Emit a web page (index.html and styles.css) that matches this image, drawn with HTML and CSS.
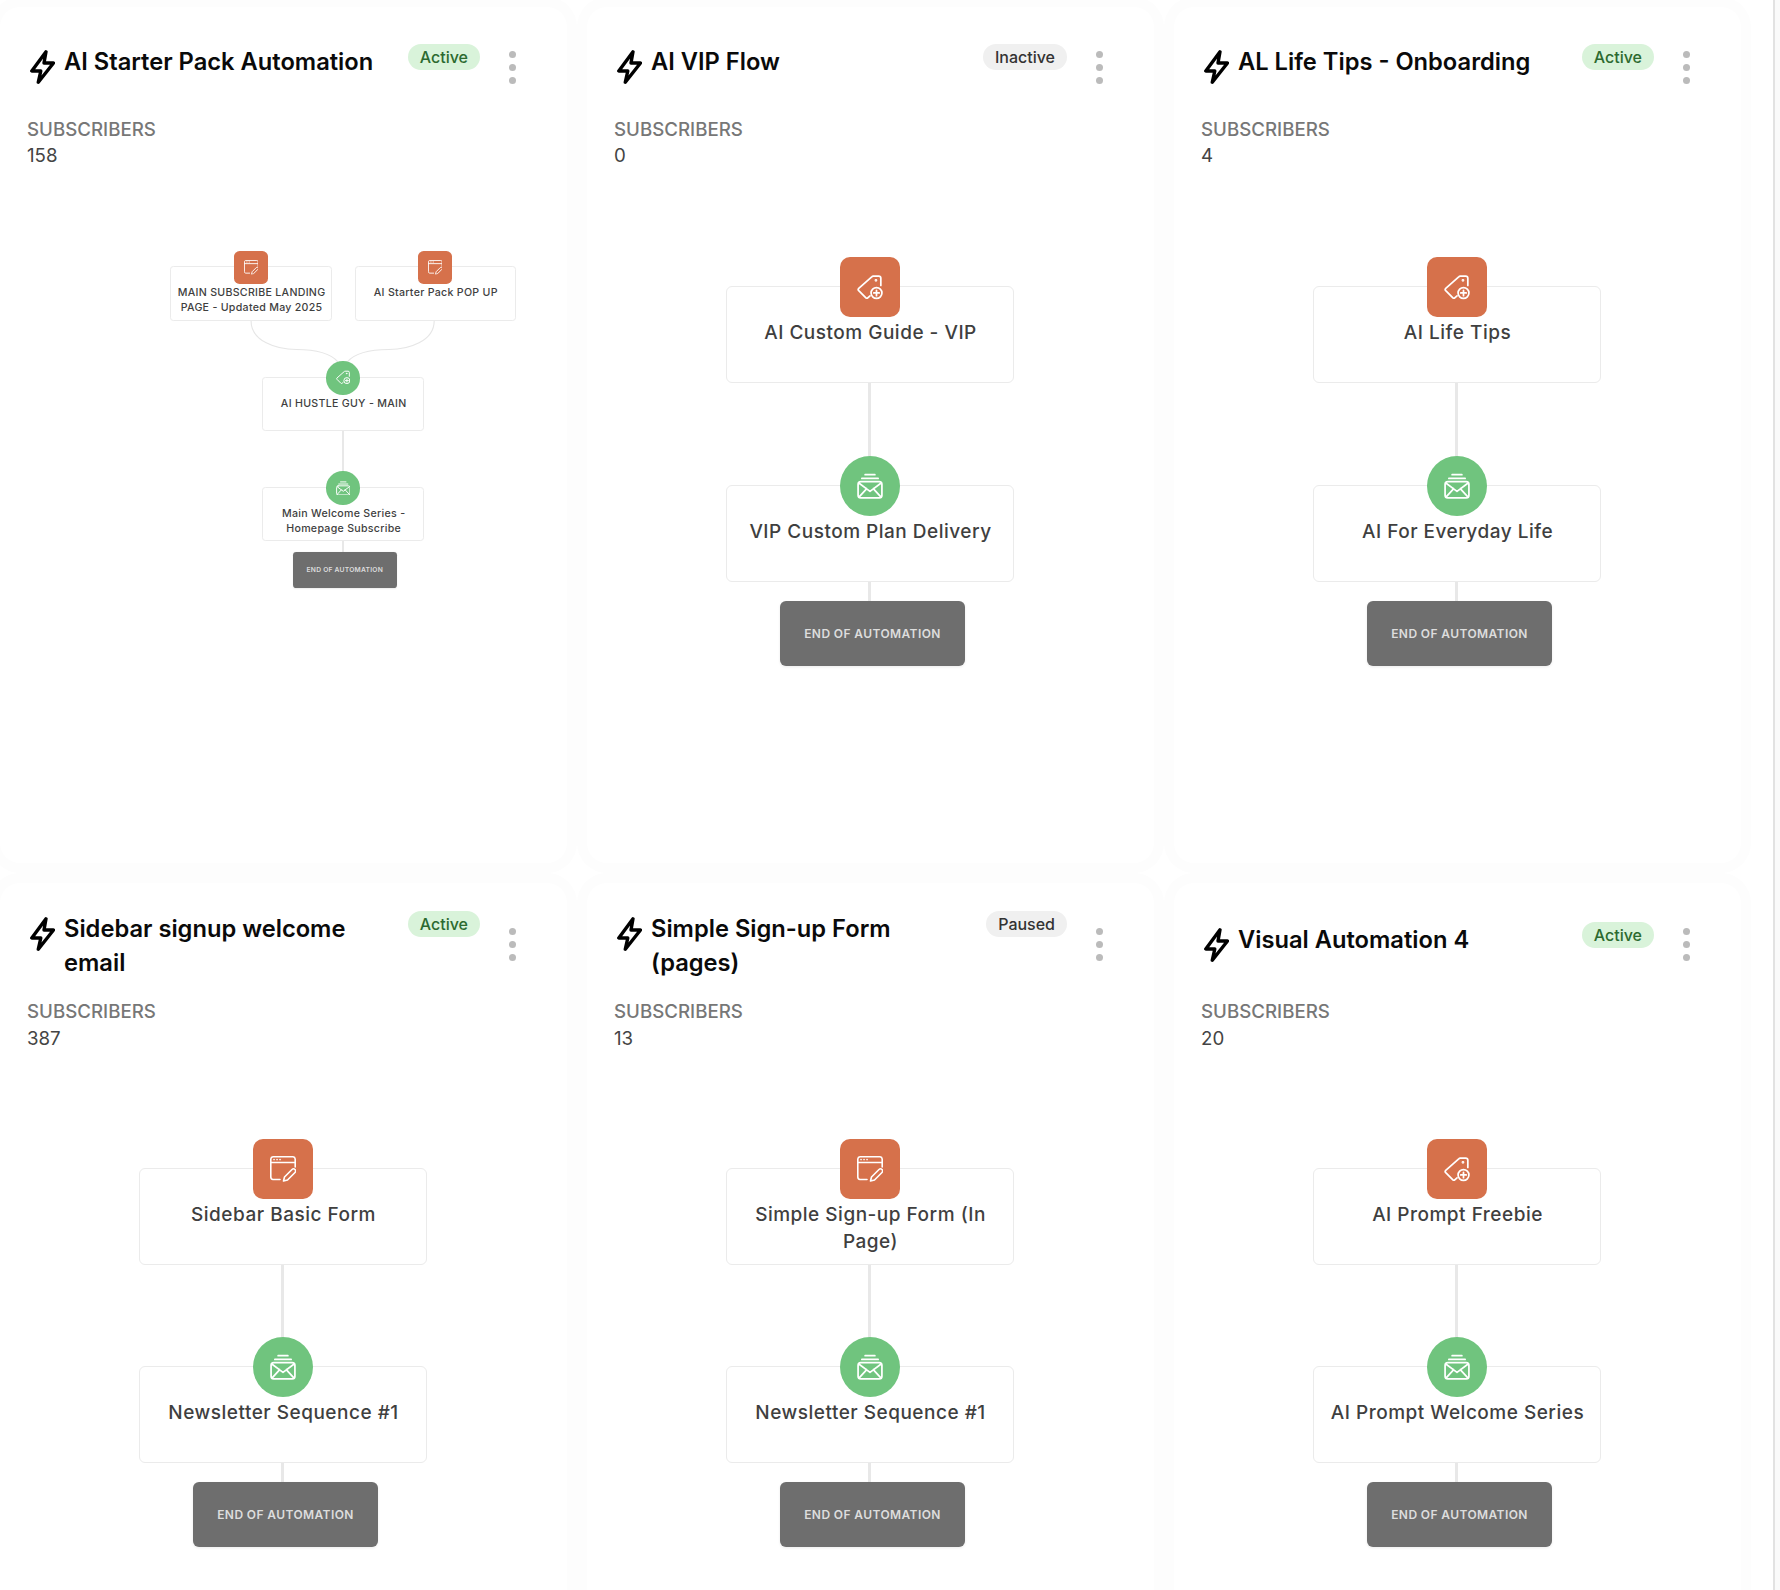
FILE: index.html
```html
<!DOCTYPE html>
<html lang="en">
<head>
<meta charset="utf-8">
<title>Automations</title>
<link rel="stylesheet" href="styles.css">
</head>
<body>
<svg class="defs" width="0" height="0" aria-hidden="true">
  <defs>
    <symbol id="i-bolt" viewBox="0 0 25 34"><path d="M16 1.800 1.800 21h9l-2.500 11.200L23.500 13H14z"/></symbol>
    <symbol id="i-tag" viewBox="0 0 24 24"><path d="M22 10.500V4a2 2 0 0 0-2-2h-5a2 2 0 0 0-1.400.6L1.600 13.200a1.600 1.600 0 0 0 0 2.200l6.400 6.400a1.600 1.600 0 0 0 2.200 0l1.800-1.600"/><circle cx="17.500" cy="5.800" r=".5"/><circle cx="18" cy="17.500" r="5"/><path d="M18 15v5M15.500 17.500h5"/></symbol>
    <symbol id="i-form" viewBox="0 0 26 26"><path d="M10 23.500H3A2.500 2.500 0 0 1 .8 21V3A2.500 2.500 0 0 1 3 .8h20A2.500 2.500 0 0 1 25.200 3v8M1 6.500h24"/><path d="M4 3.600h.1M7 3.600h.1M10 3.600h.1"/><path d="M13.500 25l1-4 7.500-7.500a2 2 0 0 1 3 3L17.500 24z"/></symbol>
    <symbol id="i-mail" viewBox="0 0 24 24"><rect x="1" y="8" width="22" height="15" rx="2.500"/><path d="m2 9.500 10 7.500 10-7.500M2 22l7-7.500M22 22l-7-7.500M4.500 5h15M7.500 1.500h9"/></symbol>
  </defs>
</svg>
<main class="grid">

  <article class="card">
    <header class="head">
      <div class="title-group">
        <svg class="bolt"><use href="#i-bolt"/></svg>
        <h2 class="title">AI Starter Pack Automation</h2>
        <span class="badge badge-active">Active</span>
      </div>
      <div class="dots"><i></i><i></i><i></i></div>
    </header>
    <div class="label">SUBSCRIBERS</div>
    <div class="value">158</div>
    <div class="flow flow-mini">
      <div class="pair">
        <div class="node"><span class="icon icon-square"><svg><use href="#i-form"/></svg></span><p>MAIN SUBSCRIBE LANDING PAGE - Updated May 2025</p></div>
        <div class="node"><span class="icon icon-square"><svg><use href="#i-form"/></svg></span><p>AI Starter Pack POP UP</p></div>
      </div>
      <svg class="curves" viewBox="0 0 613 100"><path d="M143 0C143 36 188 51 224 51C260 51 285 58 298 73M470 0C470 36 425 51 389 51C353 51 328 58 315 73"/></svg>
      <div class="node"><span class="icon icon-round"><svg><use href="#i-tag"/></svg></span><p>AI HUSTLE GUY - MAIN</p></div>
      <div class="link"></div>
      <div class="node"><span class="icon icon-round"><svg><use href="#i-mail"/></svg></span><p>Main Welcome Series - Homepage Subscribe</p></div>
      <div class="link link-short"></div>
      <div class="end">END OF AUTOMATION</div>
    </div>
  </article>

  <article class="card">
    <header class="head">
      <div class="title-group">
        <svg class="bolt"><use href="#i-bolt"/></svg>
        <h2 class="title">AI VIP Flow</h2>
        <span class="badge badge-muted">Inactive</span>
      </div>
      <div class="dots"><i></i><i></i><i></i></div>
    </header>
    <div class="label">SUBSCRIBERS</div>
    <div class="value">0</div>
    <div class="flow">
      <div class="node"><span class="icon icon-square"><svg><use href="#i-tag"/></svg></span><p>AI Custom Guide - VIP</p></div>
      <div class="link"></div>
      <div class="node"><span class="icon icon-round"><svg><use href="#i-mail"/></svg></span><p>VIP Custom Plan Delivery</p></div>
      <div class="link link-short"></div>
      <div class="end">END OF AUTOMATION</div>
    </div>
  </article>

  <article class="card">
    <header class="head">
      <div class="title-group">
        <svg class="bolt"><use href="#i-bolt"/></svg>
        <h2 class="title">AL Life Tips - Onboarding</h2>
        <span class="badge badge-active">Active</span>
      </div>
      <div class="dots"><i></i><i></i><i></i></div>
    </header>
    <div class="label">SUBSCRIBERS</div>
    <div class="value">4</div>
    <div class="flow">
      <div class="node"><span class="icon icon-square"><svg><use href="#i-tag"/></svg></span><p>AI Life Tips</p></div>
      <div class="link"></div>
      <div class="node"><span class="icon icon-round"><svg><use href="#i-mail"/></svg></span><p>AI For Everyday Life</p></div>
      <div class="link link-short"></div>
      <div class="end">END OF AUTOMATION</div>
    </div>
  </article>

  <article class="card card-tall">
    <header class="head">
      <div class="title-group">
        <svg class="bolt"><use href="#i-bolt"/></svg>
        <h2 class="title">Sidebar signup welcome email</h2>
        <span class="badge badge-active">Active</span>
      </div>
      <div class="dots"><i></i><i></i><i></i></div>
    </header>
    <div class="label">SUBSCRIBERS</div>
    <div class="value">387</div>
    <div class="flow">
      <div class="node"><span class="icon icon-square"><svg><use href="#i-form"/></svg></span><p>Sidebar Basic Form</p></div>
      <div class="link"></div>
      <div class="node"><span class="icon icon-round"><svg><use href="#i-mail"/></svg></span><p>Newsletter Sequence #1</p></div>
      <div class="link link-short"></div>
      <div class="end">END OF AUTOMATION</div>
    </div>
  </article>

  <article class="card card-tall">
    <header class="head">
      <div class="title-group">
        <svg class="bolt"><use href="#i-bolt"/></svg>
        <h2 class="title">Simple Sign-up Form (pages)</h2>
        <span class="badge badge-muted">Paused</span>
      </div>
      <div class="dots"><i></i><i></i><i></i></div>
    </header>
    <div class="label">SUBSCRIBERS</div>
    <div class="value">13</div>
    <div class="flow">
      <div class="node"><span class="icon icon-square"><svg><use href="#i-form"/></svg></span><p>Simple Sign-up Form (In Page)</p></div>
      <div class="link"></div>
      <div class="node"><span class="icon icon-round"><svg><use href="#i-mail"/></svg></span><p>Newsletter Sequence #1</p></div>
      <div class="link link-short"></div>
      <div class="end">END OF AUTOMATION</div>
    </div>
  </article>

  <article class="card card-tall">
    <header class="head">
      <div class="title-group">
        <svg class="bolt"><use href="#i-bolt"/></svg>
        <h2 class="title">Visual Automation 4</h2>
        <span class="badge badge-active">Active</span>
      </div>
      <div class="dots"><i></i><i></i><i></i></div>
    </header>
    <div class="label">SUBSCRIBERS</div>
    <div class="value">20</div>
    <div class="flow">
      <div class="node"><span class="icon icon-square"><svg><use href="#i-tag"/></svg></span><p>AI Prompt Freebie</p></div>
      <div class="link"></div>
      <div class="node"><span class="icon icon-round"><svg><use href="#i-mail"/></svg></span><p>AI Prompt Welcome Series</p></div>
      <div class="link link-short"></div>
      <div class="end">END OF AUTOMATION</div>
    </div>
  </article>

</main>
</body>
</html>
```
FILE: styles.css
```css
* { box-sizing: border-box; }
html, body { margin: 0; height: 1590px; overflow: hidden; background: #fafafa; }
body { font-family: Inter, "Liberation Sans", sans-serif; }
.defs { position: absolute; }

.grid {
  display: grid;
  grid-template-columns: repeat(3, 567px);
  grid-template-rows: 856px 856px;
  gap: 20px;
  width: 1775px;
  height: 1590px;
  padding-top: 7px;
  background: #fff;
  border-right: 2px solid #e2e2e2;
  overflow: hidden;
}

.card {
  background: #fff;
  border-radius: 20px;
  box-shadow: 0 0 0 10px #fdfdfd;
  padding: 29px 27px 0;
}
.card-tall { padding-top: 27px; }

.head { display: flex; align-items: center; height: 63px; }
.card-tall .head { height: 68px; }

.title-group { display: flex; align-items: flex-start; width: 453px; min-height: 46px; }
.card-tall .title-group { margin-top: 4px; }
.bolt {
  flex: none; width: 25px; height: 34px; margin: 5px 9px 0 3px;
  fill: none; stroke: #000; stroke-width: 3.400; stroke-linejoin: round; stroke-linecap: round;
}
.title {
  flex: 1; margin: 0 12px 0 0;
  font-size: 23.700px; font-weight: 600; line-height: 34px; color: #0a0a0a;
}
.badge {
  flex: none; height: 26px; margin-top: -1px; padding: 0 12px; border-radius: 13px;
  font-size: 16px; font-weight: 500; line-height: 26px;
}
.badge-active { background: #d9f3da; color: #2c6a30; }
.badge-muted { background: #f0f0f0; color: #333; }

.dots { display: flex; flex-direction: column; gap: 6px; margin-left: 29px; }
.dots i { display: block; width: 7px; height: 7px; border-radius: 50%; background: #bbb; }

.label { margin-top: 18px; font-size: 18.700px; font-weight: 500; line-height: 26px; color: #777; }
.card-tall .label { margin-top: 21px; }
.value { font-size: 18.700px; line-height: 26px; color: #444; }
.card-tall .value { margin-top: 1px; }

.flow { display: flex; flex-direction: column; align-items: center; margin: 117px -26px 0 -28px; }
.card-tall .flow { margin-top: 115.500px; }
.flow-mini { zoom: .56; margin: 174px 0 0 258px; width: 613px; }

.pair { display: flex; gap: 41px; }
.node {
  position: relative; flex: none;
  width: 288px; height: 97px; padding: 32px 9px 0 11px;
  background: #fff; border: 1px solid #ebebeb; border-radius: 6px;
  text-align: center;
}
.node p { margin: 0; font-size: 19px; font-weight: 500; line-height: 27px; letter-spacing: .5px; color: #3f3f3f; }
.icon {
  position: absolute; top: -30px; left: 50%; margin-left: -30px;
  display: flex; align-items: center; justify-content: center;
  width: 60px; height: 60px;
}
.icon svg {
  width: 26px; height: 26px;
  fill: none; stroke: #fff; stroke-width: 1.600; stroke-linecap: round; stroke-linejoin: round;
}
.icon-square { background: #d6714b; border-radius: 10px; }
.icon-round { background: #70c47e; border-radius: 50%; }

.link { width: 3px; height: 102px; background: #e8e8e8; }
.card-tall .link { height: 101px; }
.link.link-short { height: 19px; }
.flow-mini .link { height: 100px; }
.flow-mini .link.link-short { height: 19px; }
.curves { display: block; width: 613px; height: 100px; fill: none; stroke: #e6e6e6; stroke-width: 2; }
.end {
  width: 185px; height: 65px; margin-left: 6px; padding-left: 0;
  background: #6e6e6e; border-radius: 6px; box-shadow: 0 1px 3px rgba(0,0,0,.08);
  font-size: 12px; font-weight: 600; line-height: 65px; letter-spacing: .4px; text-align: center; color: #ddd;
}
```
